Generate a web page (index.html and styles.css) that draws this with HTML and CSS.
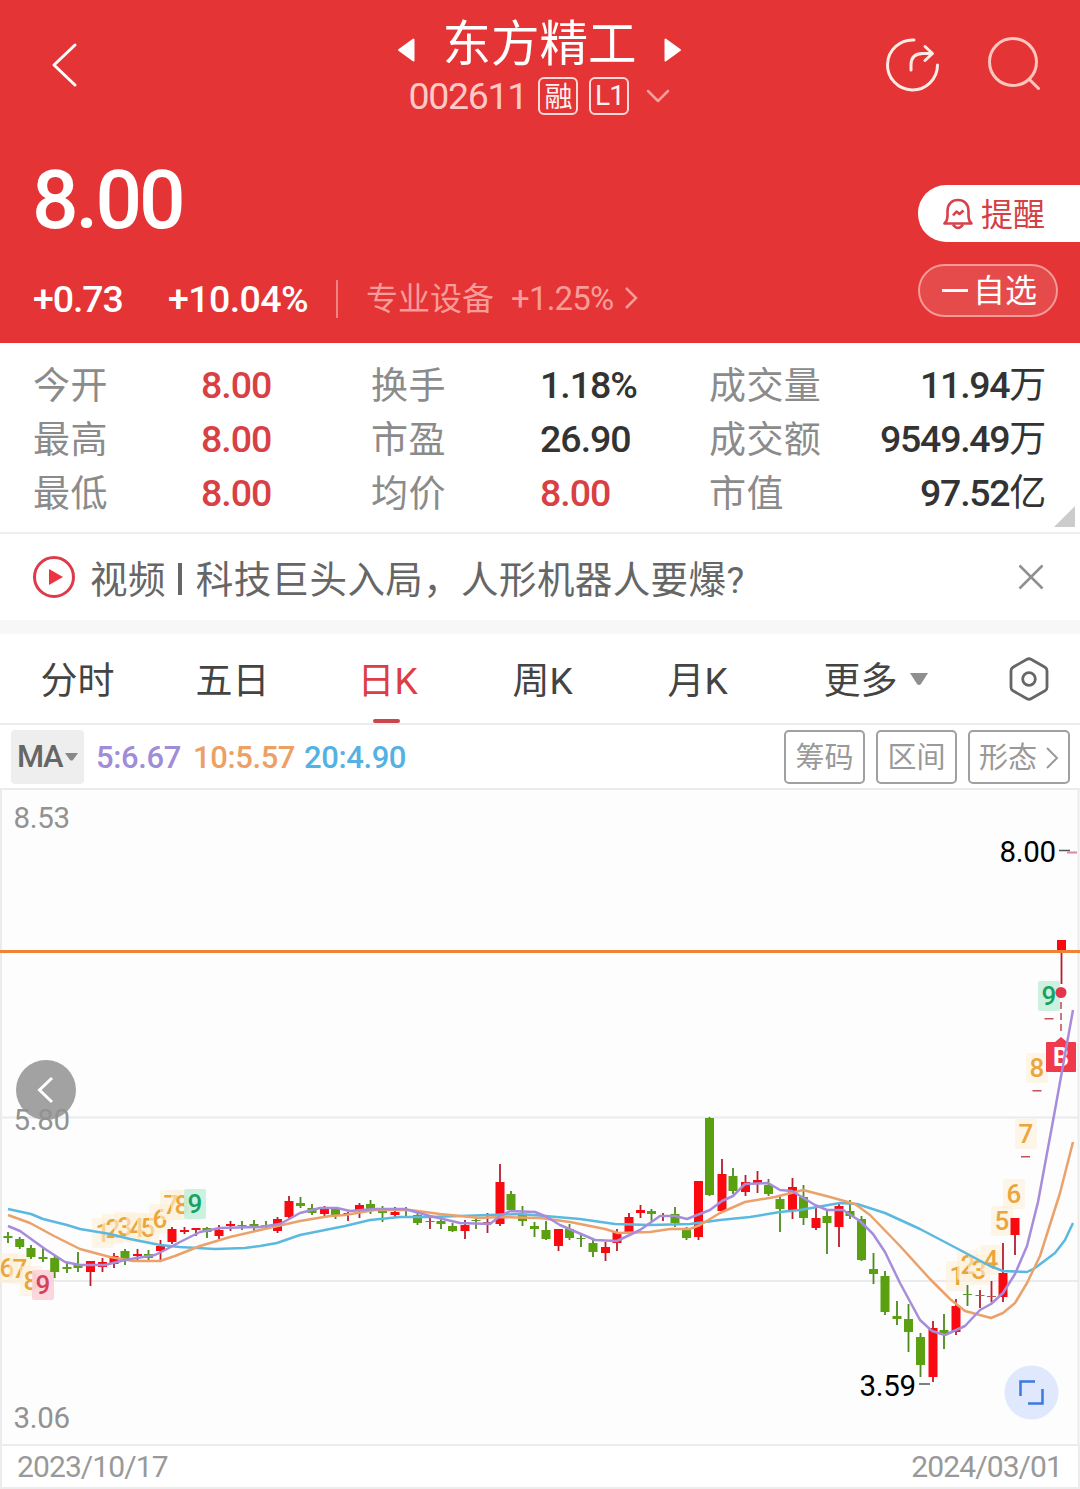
FILE: index.html
```html
<!DOCTYPE html>
<html lang="zh-CN">
<head>
    <meta charset="UTF-8">
    <meta name="viewport" content="width=device-width, initial-scale=1.0">
    <title>东方精工 002611</title>
    <link rel="stylesheet" href="styles.css">
</head>
<body>
    <div class="header">
        <div class="topbar">
            <svg class="back" width="30" height="46" viewBox="0 0 30 46"><path d="M26 3 L5 23 L26 43"/></svg>
            <div class="title-block">
                <div class="title-row">
                    <svg width="18" height="26" viewBox="0 0 18 26"><path d="M16.500 2.500V23.500L2 13Z"/></svg>
                    <h1>东方精工</h1>
                    <svg width="18" height="26" viewBox="0 0 18 26"><path d="M1.500 2.500V23.500L16 13Z"/></svg>
                </div>
                <div class="code-row">
                    <span class="code">002611</span>
                    <span class="tag">融</span>
                    <span class="tag tag-level">L1</span>
                    <svg width="24" height="16" viewBox="0 0 24 16"><path d="M2 3 L12 13 L22 3"/></svg>
                </div>
            </div>
            <div class="actions">
                <svg width="56" height="56" viewBox="0 0 56 56">
                    <path d="M29 4A25 25 0 1 0 52.500 29"/>
                    <path d="M26 34V29Q26 17.500 38 17.500H46M40 10.500L47.500 17.500L40 24.500"/>
                </svg>
                <svg class="search" width="56" height="56" viewBox="0 0 56 56">
                    <circle cx="26" cy="26" r="23.500"/>
                    <path d="M43 44L51.500 52.500"/>
                </svg>
            </div>
        </div>

        <div class="quote">
            <div class="quote-main">
                <div class="price">8.00</div>
                <div class="change-row">
                    <span class="change">+0.73</span>
                    <span class="change percent">+10.04%</span>
                    <span class="sector"><span class="sector-name">专业设备</span><span class="sector-pct">+1.25%</span></span>
                    <svg width="16" height="24" viewBox="0 0 16 24"><path d="M3 2 L13 12 L3 22"/></svg>
                </div>
            </div>
            <div class="quote-side">
                <div class="remind">
                    <svg width="30" height="32" viewBox="0 0 30 32">
                        <path d="M1.500 25.500H28.500C26 23 25.500 21 25.500 18V13C25.500 6 21 2 15 2S4.500 6 4.500 13V18C4.500 21 4 23 1.500 25.500Z"/>
                        <path d="M10 26.500Q15 33.500 20 26.500M10 17.500L13.500 13.500L16.500 16L20.500 12.500"/>
                    </svg>
                    <span>提醒</span>
                </div>
                <div class="favorite"><i></i><span>自选</span></div>
            </div>
        </div>
    </div>

    <div class="stats">
        <span class="label">今开</span><span class="up">8.00</span>
        <span class="label">换手</span><span>1.18%</span>
        <span class="label">成交量</span><span class="right">11.94<b>万</b></span>
        <span class="label">最高</span><span class="up">8.00</span>
        <span class="label">市盈</span><span>26.90</span>
        <span class="label">成交额</span><span class="right">9549.49<b>万</b></span>
        <span class="label">最低</span><span class="up">8.00</span>
        <span class="label">均价</span><span class="up">8.00</span>
        <span class="label">市值</span><span class="right">97.52<b>亿</b></span>
        <i class="corner"></i>
    </div>

    <div class="news">
        <svg width="44" height="44" viewBox="0 0 44 44">
            <circle cx="22" cy="22" r="19.500"/>
            <path d="M17 14V30L31 22Z"/>
        </svg>
        <p><span>视频</span><i></i><span>科技巨头入局，人形机器人要爆?</span></p>
        <svg class="close" width="28" height="28" viewBox="0 0 28 28"><path d="M2.500 2.500L25.500 25.500M25.500 2.500L2.500 25.500"/></svg>
    </div>

    <div class="tabs">
        <div class="tab">分时</div>
        <div class="tab">五日</div>
        <div class="tab active">日K</div>
        <div class="tab">周K</div>
        <div class="tab">月K</div>
        <div class="tab more"><span>更多</span><svg width="20" height="14" viewBox="0 0 20 14"><path d="M1 1H19L12 12Q10 14 8 12Z"/></svg></div>
        <div class="setting">
            <svg width="42" height="46" viewBox="0 0 42 46">
                <path d="M19 3.300Q21 2.200 23 3.300L37 11.200Q39 12.400 39 14.800V31.200Q39 33.600 37 34.800L23 42.700Q21 43.800 19 42.700L5 34.800Q3 33.600 3 31.200V14.800Q3 12.400 5 11.200Z"/>
                <circle cx="21" cy="23" r="6.300"/>
            </svg>
        </div>
    </div>

    <div class="indicators">
        <div class="ma-select">MA<svg width="13" height="8" viewBox="0 0 13 8"><path d="M0 0H13L8 7Q6.500 8 5 7Z"/></svg></div>
        <span class="ma5">5:6.67</span>
        <span class="ma10">10:5.57</span>
        <span class="ma20">20:4.90</span>
        <div class="tools">
            <button>筹码</button>
            <button>区间</button>
            <button class="wide">形态<svg width="14" height="24" viewBox="0 0 14 24"><path d="M2 2L12 12L2 22"/></svg></button>
        </div>
    </div>

    <svg class="chart" viewBox="0 788 1080 656" width="1080" height="656">
        <path class="grid" d="M0 789H1080M0 1117.500H1078M0 1281H1078M1 789V1444M1078.500 789V1444"/>
        <circle cx="46" cy="1090" r="30" fill="#a2a2a2"/>
        <path d="M52 1078L39.500 1090L52 1102" fill="none" stroke="#fff" stroke-width="3"/>
        <g class="axis">
            <text x="13.500" y="828">8.53</text>
            <text x="13.500" y="1130">5.80</text>
            <text x="13.500" y="1428">3.06</text>
        </g>
        <g id="badges"></g>
        <g id="candles"></g>
        <path d="M0 951.500H1080" stroke="#ee8237" stroke-width="3"/>
        <path d="M1061 1002V1032" stroke="#b54d5a" stroke-width="1.500" stroke-dasharray="7 4"/>
        <circle cx="1061" cy="992.500" r="5.500" fill="#e2364b"/>
        <path d="M1047 1042H1055L1061 1037L1067 1042H1075Q1076 1042 1076 1043V1071Q1076 1072 1075 1072H1047Q1046 1072 1046 1071V1043Q1046 1042 1047 1042Z" fill="#f03a4c"/>
        <text class="buy" x="1061" y="1066">B</text>
        <g id="lines"></g>
        <g class="marks">
            <text x="999.500" y="862">8.00</text>
            <text x="859.500" y="1396">3.59</text>
        </g>
        <path d="M1059 850.500H1070M919 1384H930" stroke="#555" stroke-width="1.500"/>
        <path d="M1067 852.500H1077" stroke="#d98a92" stroke-width="2"/>
        <circle cx="1031.500" cy="1392.500" r="27" fill="#dfe8fc"/>
        <path d="M1020.500 1396V1381.500H1035M1028 1403.500H1042.500V1389" fill="none" stroke="#3b7ade" stroke-width="2.500"/>
    </svg>

    <div class="dates">
        <span>2023/10/17</span>
        <span>2024/03/01</span>
    </div>

    <script src="chart.js"></script>
</body>
</html>
```

FILE: styles.css
```css
* {
    box-sizing: border-box;
}
body {
    margin: 0;
    width: 1080px;
    height: 1489px;
    overflow: hidden;
    background: #fff;
    color: #333;
    font-family: Roboto, "Noto Sans CJK SC", sans-serif;
}
svg {
    display: block;
    flex: none;
}
.header {
    height: 343px;
    background: #e43436;
    color: #fff;
}
.topbar {
    display: flex;
    justify-content: space-between;
    height: 130px;
    padding: 0 37px 0 49px;
}
.topbar svg {
    fill: none;
    stroke: #fff;
    stroke-width: 3;
    stroke-linecap: round;
    stroke-linejoin: round;
}
.back {
    margin-top: 42px;
}
.title-block {
    margin-left: 115px;
}
.title-row {
    display: flex;
    align-items: center;
    justify-content: center;
    gap: 27px;
    height: 76px;
    padding-top: 14px;
}
.title-row svg {
    margin-top: 10px;
    fill: #fff;
    stroke-width: 2;
}
h1 {
    margin: 0;
    font-size: 48.500px;
    font-weight: 400;
    line-height: 62px;
}
.code-row {
    display: flex;
    align-items: center;
    justify-content: center;
    height: 40px;
}
.code {
    width: 130px;
    color: #ffc9c5;
    font-size: 37.500px;
    letter-spacing: -1.300px;
}
.tag {
    display: flex;
    align-items: center;
    justify-content: center;
    width: 40px;
    height: 38px;
    margin-right: 11px;
    border: 2px solid #ffd9d6;
    border-radius: 6px;
    color: #fff1ef;
    font-size: 28px;
    line-height: 34px;
}
.tag:not(.tag-level) {
    padding-top: 3px;
}
.tag-level {
    margin-right: 17px;
    letter-spacing: -1px;
}
.topbar .code-row svg {
    stroke: #f79f9c;
    stroke-width: 2.500;
}
.actions {
    display: flex;
    gap: 46px;
    margin-top: 36px;
}
.topbar .actions svg {
    stroke: #ffeae4;
}
.topbar .actions .search {
    stroke: #ffc6c0;
}
.quote {
    display: flex;
    justify-content: space-between;
}
.quote-main {
    padding-left: 32px;
}
.price {
    height: 138px;
    font-size: 82px;
    font-weight: 500;
    line-height: 140px;
    letter-spacing: -3px;
}
.change-row {
    display: flex;
    align-items: center;
    height: 62px;
}
.change {
    width: 135px;
    padding-left: 1px;
    font-size: 37.500px;
    font-weight: 500;
    letter-spacing: -1.100px;
}
.percent {
    width: 169px;
    letter-spacing: -.600px;
}
.sector {
    display: flex;
    align-items: center;
    gap: 17px;
    height: 38px;
    width: 287px;
    padding-left: 28px;
    border-left: 2px solid #ef8583;
    color: #f79c99;
    font-size: 32px;
    white-space: nowrap;
}
.sector-name {
    padding-bottom: 7px;
}
.sector-pct {
    margin-top: -2px;
    font-size: 33px;
    letter-spacing: -.800px;
}
.change-row svg {
    margin-top: -3px;
    fill: none;
    stroke: #f79c99;
    stroke-width: 2.500;
}
.quote-side {
    width: 162px;
    padding-top: 55px;
    font-size: 32px;
}
.remind {
    display: flex;
    align-items: center;
    gap: 8px;
    height: 57px;
    padding-left: 25px;
    border-radius: 28px 0 0 28px;
    background: #fff;
    color: #d34145;
}
.remind svg {
    fill: none;
    stroke: #d8404c;
    stroke-width: 2.600;
    stroke-linejoin: round;
}
.remind span {
    padding-bottom: 4px;
}
.favorite {
    display: flex;
    align-items: center;
    gap: 5px;
    width: 140px;
    height: 53px;
    margin-top: 22px;
    padding-left: 22px;
    border: 2px solid #f59a97;
    border-radius: 27px;
    background: #e64b4c;
}
.favorite i {
    width: 26px;
    height: 3px;
    background: #fff;
}
.favorite span {
    line-height: 46px;
}
.stats {
    position: relative;
    display: grid;
    grid-template-columns: 168px 170px 169px 169px 148px 188px;
    grid-auto-rows: 54px;
    height: 191px;
    padding: 15px 0 0 33px;
    border-bottom: 2px solid #eee;
    font-size: 37.500px;
    font-weight: 500;
    line-height: 54px;
    letter-spacing: -1px;
    white-space: nowrap;
}
.stats .label {
    padding-top: 2px;
    color: #8b8b8b;
    font-size: 37px;
    font-weight: 400;
    letter-spacing: .400px;
}
.stats .up {
    color: #d94043;
}
.stats .right {
    text-align: right;
    letter-spacing: -1.300px;
}
.stats b {
    font-size: 37px;
    font-weight: 400;
}
.corner {
    position: absolute;
    right: 5px;
    bottom: 5px;
    border-left: 21px solid transparent;
    border-bottom: 21px solid #ccc;
}
.news {
    display: flex;
    align-items: center;
    height: 100px;
    padding: 0 35px 0 32px;
    border-bottom: 14px solid #f7f7f7;
    color: #666;
    font-size: 37.500px;
}
.news circle {
    fill: none;
    stroke: #dd3a4b;
    stroke-width: 3;
}
.news path {
    fill: #ee3340;
}
.news p {
    display: flex;
    align-items: center;
    flex: 1;
    margin: 0 0 0 14px;
    letter-spacing: .400px;
}
.news p span {
    padding-bottom: 2px;
}
.news p i {
    width: 4px;
    height: 32px;
    margin: 3px 14px 0 12px;
    background: #666;
}
.news .close path {
    fill: none;
    stroke: #909090;
    stroke-width: 2.500;
}
.tabs {
    display: flex;
    height: 91px;
    border-bottom: 2px solid #ececec;
    color: #444;
    font-size: 37px;
    line-height: 95px;
}
.tab {
    position: relative;
    width: 155px;
    text-align: center;
}
.active {
    color: #dc3d46;
}
.active::after {
    content: "";
    position: absolute;
    left: 63px;
    bottom: 0;
    width: 27px;
    height: 4px;
    border-radius: 2px;
    background: #c8474f;
}
.more {
    display: flex;
    align-items: center;
    justify-content: center;
    gap: 11px;
    width: 202px;
}
.more span {
    padding-top: 5px;
}
.more path {
    fill: #8f8f8f;
}
.setting {
    display: flex;
    align-items: center;
    padding-left: 31px;
}
.setting svg {
    fill: none;
    stroke: #666;
    stroke-width: 2.800;
}
.indicators {
    display: flex;
    align-items: center;
    height: 63px;
    padding: 0 10px 0 11px;
    font-size: 31px;
    font-weight: 500;
}
.ma-select {
    display: flex;
    align-items: center;
    gap: 3px;
    width: 73px;
    height: 54px;
    margin-right: 12px;
    padding-left: 6px;
    border-radius: 4px;
    background: #eee;
    color: #666;
    letter-spacing: -1.500px;
}
.ma-select path {
    fill: #888;
}
.ma5, .ma10, .ma20 {
    padding-top: 2px;
    letter-spacing: -.400px;
}
.ma5 {
    width: 97px;
    color: #a08cd8;
}
.ma10 {
    width: 111px;
    color: #eda064;
}
.ma20 {
    color: #54b2e2;
}
.tools {
    display: flex;
    gap: 11px;
    margin-left: auto;
}
.tools button {
    display: flex;
    align-items: center;
    justify-content: center;
    gap: 8px;
    width: 81px;
    height: 54px;
    padding: 2px 0 0;
    border: 2px solid #a0a0a0;
    border-radius: 5px;
    background: #fff;
    color: #999;
    font-family: inherit;
    font-size: 29px;
    line-height: 50px;
}
.tools .wide {
    width: 102px;
}
.tools path {
    fill: none;
    stroke: #999;
    stroke-width: 2;
}
.chart {
    background: #fdfdfd;
}
.grid {
    stroke: #ebebeb;
    stroke-width: 2;
}
.axis {
    fill: #929292;
    font-size: 29.500px;
    letter-spacing: -.300px;
}
.marks {
    fill: #000;
    font-size: 29.500px;
    letter-spacing: -.300px;
}
.buy {
    fill: #fff;
    font-size: 25px;
    font-weight: 700;
    text-anchor: middle;
}
.badge {
    font-size: 26px;
    font-weight: 500;
    text-anchor: middle;
}
.line {
    fill: none;
    stroke-width: 2.500;
    stroke-linejoin: round;
}
.dates {
    display: flex;
    justify-content: space-between;
    height: 45px;
    padding: 0 16px 0 15px;
    border: 2px solid #ececec;
    color: #999;
    font-size: 30px;
    line-height: 41px;
    letter-spacing: -.900px;
}
```

FILE: chart.js
```js
const NS = 'http://www.w3.org/2000/svg';

function add(parent, tag, attrs, text) {
    const el = document.createElementNS(NS, tag);
    for (const key in attrs) el.setAttribute(key, attrs[key]);
    if (text) el.textContent = text;
    document.getElementById(parent).appendChild(el);
}

// x, direction, wick top, body top, body bottom, wick bottom
const candles = [
    [8, 'd', 1232, 1236, 1238, 1243], [19.7, 'd', 1237, 1239, 1247, 1249], [31, 'd', 1245, 1248, 1257, 1259],
    [43, 'd', 1247, 1257, 1259, 1262], [54.7, 'd', 1256, 1258, 1272, 1278], [67, 'd', 1262, 1267, 1269, 1273],
    [78, 'd', 1252, 1265, 1268, 1272], [90.5, 'u', 1261, 1261, 1272, 1286], [102.5, 'u', 1258, 1262, 1267, 1272],
    [114, 'u', 1253, 1256, 1264, 1268], [125, 'd', 1249, 1251, 1259, 1265], [137.5, 'u', 1249, 1254, 1256, 1260],
    [148.5, 'd', 1250, 1254, 1258, 1261], [160.5, 'u', 1240, 1246, 1251, 1262], [172, 'u', 1227, 1229, 1242, 1244],
    [184.5, 'u', 1227, 1230, 1232, 1234], [196, 'u', 1228, 1228, 1230, 1236], [207, 'd', 1227, 1228, 1232, 1238],
    [219, 'u', 1225, 1230, 1236, 1239], [230.5, 'u', 1221, 1224, 1226, 1231], [242, 'd', 1221, 1225, 1226, 1230],
    [254, 'd', 1220, 1224, 1226, 1231], [266, 'd', 1221, 1225, 1226, 1229], [277.5, 'u', 1217, 1219, 1231, 1233],
    [289, 'u', 1196, 1201, 1217, 1219], [300.5, 'd', 1197, 1203, 1206, 1208], [312, 'd', 1204, 1208, 1213, 1215],
    [324.5, 'u', 1206, 1209, 1214, 1217], [335.5, 'd', 1207, 1209, 1215, 1219], [348, 'u', 1212, 1213, 1215, 1221],
    [359.5, 'u', 1203, 1205, 1210, 1218], [370.5, 'd', 1200, 1204, 1209, 1214], [382.5, 'd', 1206, 1211, 1213, 1222],
    [395, 'u', 1207, 1212, 1215, 1217], [406, 'd', 1207, 1210, 1211, 1216], [417.5, 'd', 1213, 1215, 1223, 1225],
    [430, 'u', 1217, 1221, 1222, 1229], [441, 'd', 1219, 1221, 1224, 1229], [452.5, 'd', 1223, 1226, 1231, 1232],
    [465, 'u', 1220, 1225, 1231, 1239], [476, 'd', 1217, 1220, 1221, 1229], [487.5, 'u', 1213, 1222, 1223, 1233],
    [500, 'u', 1164, 1182, 1224, 1226], [511, 'd', 1191, 1194, 1210, 1211], [522.5, 'd', 1206, 1215, 1221, 1226],
    [534.5, 'd', 1222, 1226, 1229, 1237], [546, 'd', 1221, 1230, 1239, 1240], [558.5, 'u', 1229, 1229, 1246, 1251],
    [569.5, 'd', 1224, 1229, 1238, 1240], [581, 'd', 1235, 1238, 1239, 1247], [593, 'd', 1238, 1243, 1252, 1257],
    [605.5, 'u', 1242, 1247, 1253, 1261], [617, 'u', 1229, 1232, 1243, 1251], [629, 'u', 1213, 1217, 1232, 1233],
    [640.5, 'u', 1205, 1210, 1213, 1218], [651.5, 'd', 1209, 1211, 1214, 1221], [663, 'u', 1213, 1216, 1217, 1221],
    [675, 'd', 1207, 1214, 1223, 1227], [686.5, 'd', 1227, 1230, 1238, 1240], [698.5, 'u', 1181, 1181, 1237, 1240],
    [709.5, 'd', 1117, 1118, 1195, 1196], [722, 'u', 1159, 1174, 1211, 1212], [733, 'd', 1168, 1176, 1191, 1194],
    [745.5, 'u', 1175, 1182, 1192, 1196], [757.5, 'u', 1171, 1180, 1183, 1193], [768.5, 'd', 1179, 1185, 1194, 1196],
    [780, 'd', 1196, 1199, 1209, 1232], [792.5, 'u', 1178, 1187, 1210, 1219], [803.5, 'd', 1185, 1197, 1218, 1225],
    [816, 'u', 1208, 1218, 1228, 1230], [827, 'd', 1210, 1216, 1223, 1254], [839, 'u', 1202, 1206, 1227, 1247],
    [850, 'd', 1200, 1211, 1216, 1219], [861.5, 'd', 1216, 1219, 1260, 1261], [873.5, 'd', 1253, 1269, 1274, 1284],
    [885, 'd', 1271, 1276, 1312, 1315], [897, 'd', 1301, 1316, 1319, 1325], [908.5, 'd', 1304, 1319, 1332, 1352],
    [920.5, 'd', 1333, 1337, 1365, 1377], [933, 'u', 1321, 1328, 1377, 1382], [944, 'd', 1314, 1330, 1335, 1349],
    [956, 'u', 1299, 1306, 1332, 1335], [967.5, 'd', 1285, 1294, 1295, 1306], [980, 'u', 1290, 1295, 1296, 1308],
    [991.5, 'u', 1281, 1296, 1297, 1302], [1003, 'u', 1243, 1273, 1297, 1302], [1015, 'u', 1218, 1218, 1235, 1255],
    [1025.5, 'u', 1156, 1156, 1157.5, 1157], [1037, 'u', 1090, 1090, 1091.5, 1091], [1049, 'u', 1018, 1018, 1019.5, 1019],
    [1061.5, 'u', 940, 940, 953, 984]
];

// digit, center x, center y, kind
const badges = [
    [6, 7, 1268], [7, 20, 1269], [8, 31, 1281], [9, 43, 1285, 'sell'],
    [1, 103, 1233], [2, 113, 1229], [3, 125, 1227], [4, 137, 1228], [5, 148, 1228],
    [6, 160, 1219], [7, 171, 1205], [8, 182, 1205], [9, 195, 1204, 'good'],
    [1, 957, 1276], [2, 968, 1265], [3, 979, 1270], [4, 991, 1260], [5, 1002, 1221],
    [6, 1014, 1194], [7, 1026, 1134], [8, 1037, 1068], [9, 1049, 996, 'good']
];

const lines = {
    '#5bb9e0': '8,1209 31,1214 43,1219 67,1225 80,1229 110,1234 130,1239 160,1245 180,1247 215,1249 245,1248 260,1246 277,1243 300,1235 330,1229 345,1226 370,1220 400,1217 430,1217 490,1215 520,1214 545,1216 580,1219 615,1224 650,1225 690,1224 720,1220 750,1217 780,1212 800,1210 840,1203 857,1204 885,1213 920,1229 960,1250 990,1266 1003,1271 1027,1272 1035,1268 1055,1253 1065,1240 1073,1223',
    '#eba16a': '8,1215 30,1223 54,1236 80,1249 110,1257 133,1261 160,1261 175,1256 200,1246 230,1237 260,1230 300,1221 330,1216 345,1215 375,1210 410,1210 440,1214 480,1218 500,1217 540,1218 570,1222 605,1229 618,1233 650,1232 670,1229 690,1229 700,1225 720,1213 745,1202 775,1197 803,1190 830,1197 855,1204 870,1215 900,1246 930,1279 950,1299 965,1311 991,1318 1003,1313 1015,1303 1027,1283 1040,1256 1060,1193 1073,1142',
    '#a68ddc': '8,1226 20,1231 45,1249 65,1262 80,1265 105,1265 125,1260 155,1255 165,1250 180,1242 200,1232 220,1228 260,1227 280,1224 300,1213 320,1208 337,1208 350,1211 375,1209 405,1209 430,1216 460,1223 490,1224 500,1216 510,1211 535,1212 547,1217 560,1225 595,1240 617,1241 640,1230 660,1216 675,1216 687,1219 710,1210 722,1201 733,1196 745,1184 768,1183 780,1190 792,1191 815,1205 827,1210 843,1210 860,1221 873,1234 885,1252 900,1283 920,1320 932,1331 945,1335 965,1326 980,1310 991,1304 1003,1293 1015,1274 1027,1246 1038,1202 1055,1110 1073,1010'
};

const badgeColors = {
    plain: ['#fdf0d9', '#eaa63c', 0.6],
    sell: ['#fbd3d9', '#d8405c', 0.9],
    good: ['#c6efdc', '#17a166', 0.9]
};

badges.forEach(([n, x, y, kind = 'plain']) => {
    const [bg, fg, opacity] = badgeColors[kind];
    add('badges', 'rect', { x: x - 11, y: y - 15, width: 22, height: 30, rx: 2, fill: bg, opacity: opacity });
    add('badges', 'text', { class: 'badge', x: x, y: y + 9, fill: fg }, String(n));
});

candles.forEach(([x, dir, high, top, bottom, low]) => {
    const up = dir === 'u';
    const flat = bottom - top < 2;
    const body = up ? '#f90a10' : '#5aa010';
    const dash = up ? '#c4505c' : '#5b9a2c';
    add('candles', 'path', { d: `M${x} ${high}V${low}`, stroke: up ? '#b3202d' : '#4c8a1c', 'stroke-width': 1.8 });
    add('candles', 'rect', { x: x - 4.5, y: top, width: 9, height: bottom - top, fill: flat ? dash : body });
});

for (const color in lines) {
    add('lines', 'polyline', { class: 'line', points: lines[color], stroke: color });
}
```
